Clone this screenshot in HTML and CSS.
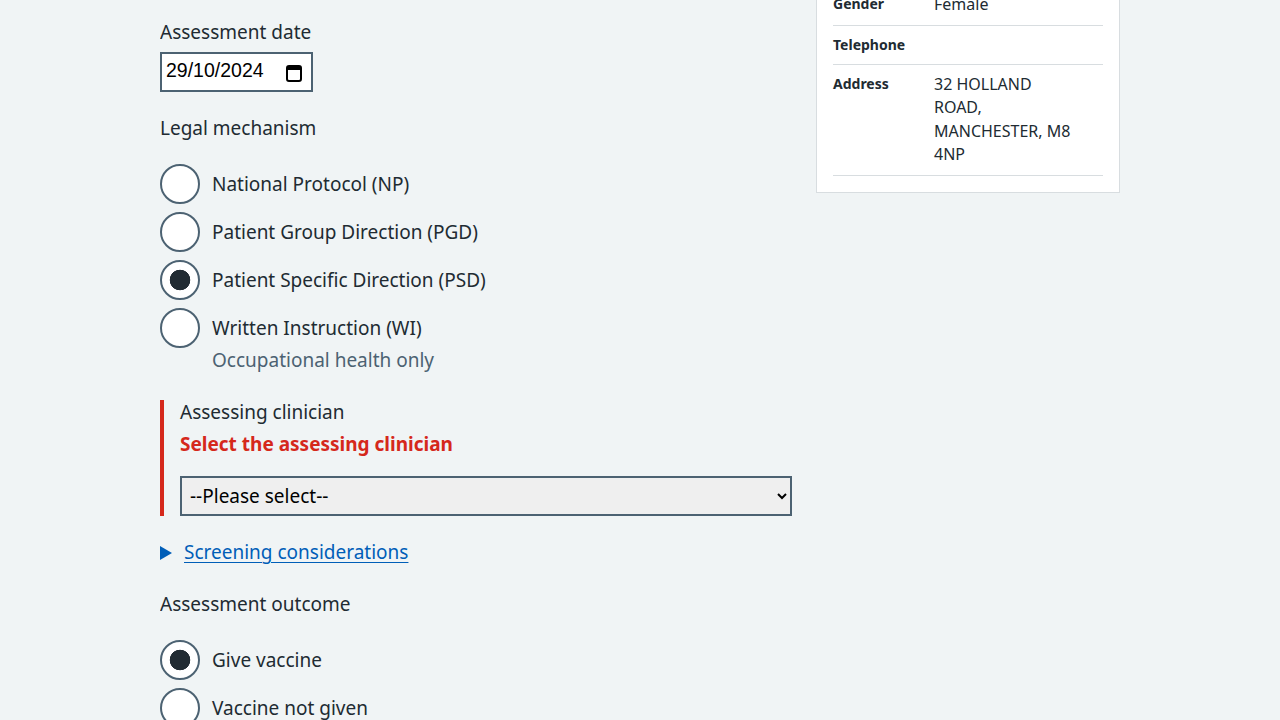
FILE: index.html
```html
<!DOCTYPE html>
<html lang="en">
<head>
<meta charset="utf-8">
<title>Assessment</title>
<link rel="stylesheet" href="styles.css">
</head>
<body>
<div class="page">
  <main class="grid">
    <div class="col-main">
      <div class="form-group">
        <label class="label">Assessment date</label>
        <div class="date-input">
          <span class="date-value">29/10/2024</span>
          <svg class="cal-icon" width="16" height="18" viewBox="0 0 16 18"><rect x="1" y="2" width="14" height="15" rx="2" fill="none" stroke="#000" stroke-width="2"/><rect x="1" y="2" width="14" height="4" fill="#000"/></svg>
        </div>
      </div>

      <fieldset class="fieldset">
        <legend class="legend">Legal mechanism</legend>
        <div class="radios">
          <div class="radio-item"><input class="radio-input" type="radio" name="legal"><span class="radio-label">National Protocol (NP)</span></div>
          <div class="radio-item"><input class="radio-input" type="radio" name="legal"><span class="radio-label">Patient Group Direction (PGD)</span></div>
          <div class="radio-item"><input class="radio-input" type="radio" name="legal" checked><span class="radio-label">Patient Specific Direction (PSD)</span></div>
          <div class="radio-item radio-item-hint"><input class="radio-input" type="radio" name="legal"><div class="radio-text"><span class="radio-label">Written Instruction (WI)</span><span class="hint">Occupational health only</span></div></div>
        </div>
      </fieldset>

      <div class="form-group form-group-error">
        <label class="label label-error-group">Assessing clinician</label>
        <span class="error-message">Select the assessing clinician</span>
        <select class="select">
          <option>--Please select--</option>
        </select>
      </div>

      <details class="details">
        <summary class="summary"><span class="summary-text">Screening considerations</span></summary>
      </details>

      <fieldset class="fieldset">
        <legend class="legend">Assessment outcome</legend>
        <div class="radios">
          <div class="radio-item"><input class="radio-input" type="radio" name="outcome" checked><span class="radio-label">Give vaccine</span></div>
          <div class="radio-item"><input class="radio-input" type="radio" name="outcome"><span class="radio-label">Vaccine not given</span></div>
        </div>
      </fieldset>
    </div>

    <aside class="card">
      <dl class="summary-list">
        <div class="row"><dt class="key">NHS number</dt><dd class="value">999 123 4567</dd></div>
        <div class="row"><dt class="key">Date of birth</dt><dd class="value">1 January 1990</dd></div>
        <div class="row"><dt class="key">Gender</dt><dd class="value">Female</dd></div>
        <div class="row"><dt class="key">Telephone</dt><dd class="value"></dd></div>
        <div class="row"><dt class="key">Address</dt><dd class="value">32 HOLLAND ROAD, MANCHESTER, M8 4NP</dd></div>
      </dl>
    </aside>
  </main>
</div>
</body>
</html>
```

FILE: styles.css
```css
html, body {
  margin: 0;
  padding: 0;
  background: #f0f4f5;
}
body {
  font-family: "Noto Sans", "Liberation Sans", sans-serif;
  color: #212b32;
  font-size: 19px;
  line-height: 24px;
}
.page {
  width: 960px;
  margin: 0 auto;
  height: 720px;
  overflow: hidden;
}
.grid {
  display: grid;
  grid-template-columns: 632px 304px;
  column-gap: 24px;
  align-items: start;
}
.col-main {
  padding-top: 20px;
}
.form-group {
  margin-bottom: 24px;
}
.label, .legend {
  display: block;
  font-size: 19px;
  line-height: 24px;
}
.date-input {
  margin-top: 8px;
  box-sizing: border-box;
  width: 153px;
  height: 40px;
  border: 2px solid #4c6272;
  background: #fff;
  display: flex;
  align-items: center;
  justify-content: space-between;
  padding: 0 9px 0 4px;
}
.date-value {
  font-family: "Liberation Sans", Arial, sans-serif;
  font-size: 19.5px;
  color: #000;
  margin-top: -4px;
}
.cal-icon {
  margin-top: 2px;
}
.fieldset {
  border: 0;
  margin: 0 0 28px 0;
  padding: 0;
  min-width: 0;
}
.legend {
  padding: 0;
  margin-bottom: 24px;
}
.radios {
  display: flex;
  flex-direction: column;
  gap: 8px;
}
.radio-item {
  display: flex;
  align-items: flex-start;
  gap: 12px;
}
.radio-input {
  appearance: none;
  -webkit-appearance: none;
  width: 40px;
  height: 40px;
  margin: 0;
  box-sizing: border-box;
  border: 2px solid #4c6272;
  border-radius: 50%;
  background: #fff;
  flex: none;
}
.radio-input:checked {
  background: radial-gradient(circle, #212b32 0 10px, #fff 10.6px);
}
.radio-label {
  display: block;
  font-size: 19px;
  line-height: 24px;
  padding-top: 8px;
}
.radio-text {
  display: flex;
  flex-direction: column;
}
.hint {
  color: #4c6272;
  font-size: 19px;
  line-height: 24px;
  margin-top: 8px;
}
.form-group-error {
  border-left: 4px solid #d5281b;
  padding-left: 16px;
  margin-bottom: 24px;
}
.error-message {
  display: block;
  color: #d5281b;
  font-weight: 700;
  font-size: 19px;
  line-height: 24px;
  margin-top: 8px;
  margin-bottom: 20px;
}
.select {
  display: block;
  width: 612px;
  height: 40px;
  box-sizing: border-box;
  border: 2px solid #4c6272;
  border-radius: 0;
  background-color: #efefef;
  color: #000;
  font-family: "Noto Sans", "Liberation Sans", sans-serif;
  font-size: 19px;
  padding: 0 4px;
  margin: 0;
}
.details {
  margin-bottom: 28px;
}
.summary {
  list-style: none;
  display: flex;
  align-items: center;
  gap: 12px;
  color: #005eb8;
  line-height: 24px;
  cursor: pointer;
}
.summary::-webkit-details-marker {
  display: none;
}
.summary::before {
  content: "";
  width: 0;
  height: 0;
  border-top: 7px solid transparent;
  border-bottom: 7px solid transparent;
  border-left: 12px solid #005eb8;
  margin-top: 2px;
}
.summary-text {
  text-decoration: underline;
  text-underline-offset: 3px;
  text-decoration-thickness: 1px;
}
.card {
  margin-top: -113px;
  background: #fff;
  border: 1px solid #d8dde0;
  padding: 16px;
}
.summary-list {
  margin: 0;
}
.row {
  display: grid;
  grid-template-columns: 101px 140px;
  border-bottom: 1px solid #d8dde0;
}
.key {
  font-weight: 700;
  font-size: 14px;
  line-height: 22px;
  padding: 8px 0;
  margin: 0;
}
.value {
  margin: 0;
  font-size: 16px;
  line-height: 23.5px;
  padding: 8px 0;
}
```
